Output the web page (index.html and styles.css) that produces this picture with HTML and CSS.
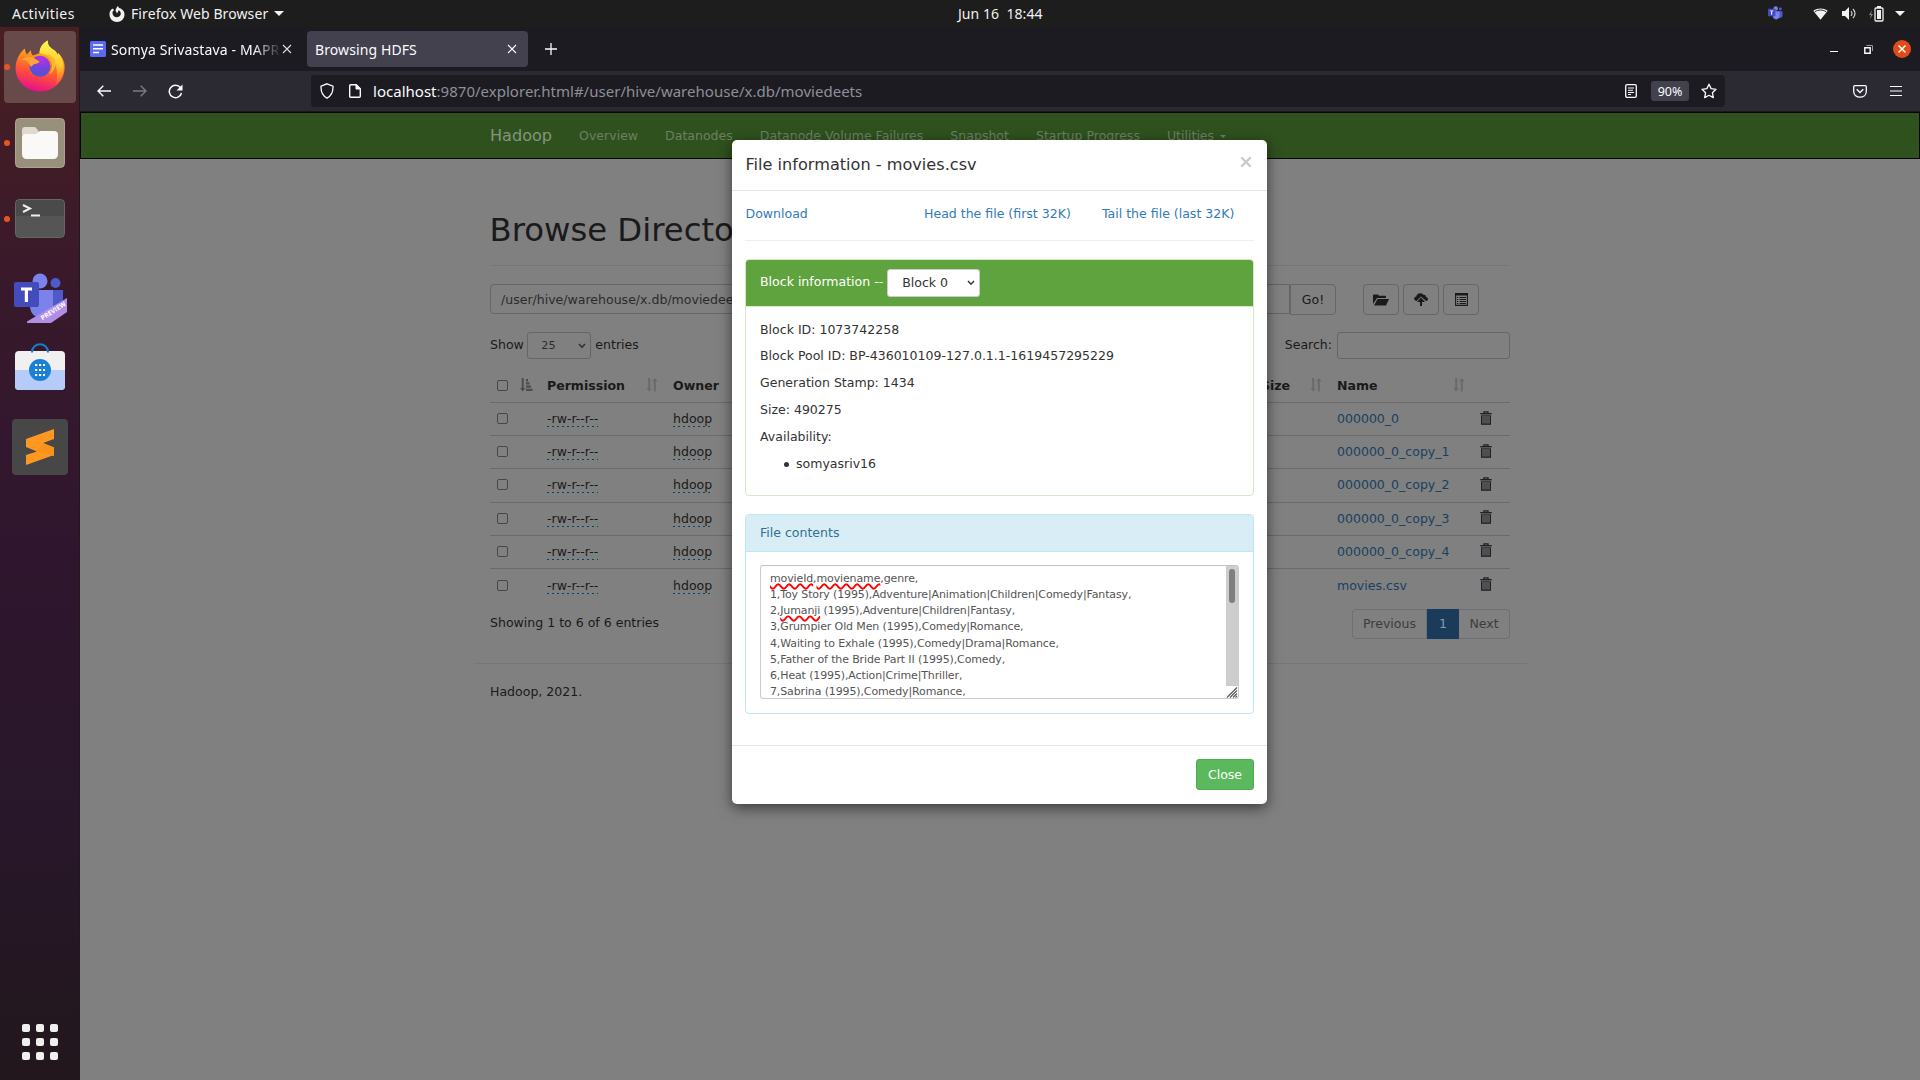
FILE: index.html
```html
<!DOCTYPE html>
<html lang="en">
<head>
<meta charset="utf-8">
<title>Browsing HDFS</title>
<link rel="stylesheet" href="styles.css">
</head>
<body>
<svg class="defs" width="0" height="0" aria-hidden="true">
  <defs>
    <linearGradient id="flame" x1="0.7" y1="0" x2="0.45" y2="1"><stop offset="0" stop-color="#ffd83a"/><stop offset=".4" stop-color="#ff8a1c"/><stop offset=".72" stop-color="#ff4544"/><stop offset="1" stop-color="#e3128a"/></linearGradient>
    <linearGradient id="tail" x1="0" y1="0" x2="0" y2="1"><stop offset="0" stop-color="#fff44f"/><stop offset=".55" stop-color="#ffcb2e"/><stop offset="1" stop-color="#ff8a16" stop-opacity=".15"/></linearGradient>
    <radialGradient id="globe" cx=".6" cy=".15" r=".85"><stop offset="0" stop-color="#b833e1"/><stop offset=".5" stop-color="#7a41d9"/><stop offset="1" stop-color="#4a55d8"/></radialGradient>
    <symbol id="x" viewBox="0 0 10 10"><path d="M1 1l8 8M9 1L1 9" stroke="currentColor" stroke-width="1.1"/></symbol>
    <symbol id="sort" viewBox="0 0 12 14"><path d="M2.200 0h2v10h1.700L3.200 13.500.4 10h1.800zM7.800 13.500h2v-10h1.800L8.800 0 6.200 3.500h1.600z" fill="currentColor"/></symbol>
    <symbol id="trash" viewBox="0 0 12 14"><path d="M4 2V.8h4V2" fill="none" stroke="currentColor" stroke-width="1.3"/><path d="M.3 2h11.400v1.400H.3z" fill="currentColor"/><path d="M1 4.300h10V13.800H1z" fill="currentColor"/><path d="M3 5v7.600M5 5v7.600M7 5v7.600M9 5v7.600" stroke="#808080" stroke-width="1"/></symbol>
    <symbol id="teams" viewBox="0 0 54 50"><circle cx="26" cy="8" r="7.500" fill="#7b83eb"/><circle cx="41.500" cy="10" r="5" fill="#5059c9"/><path d="M35 17h14v16a8 8 0 0 1-14 4z" fill="#5059c9"/><path d="M16 17h23v16c0 16-23 16-23 0z" fill="#7b83eb"/><rect y="9" width="25" height="25" rx="2" fill="#434cba"/><path d="M7 14.500h11v3h-4v11.500h-3.200V17.500H7z" fill="#fff"/></symbol>
    <symbol id="chev" viewBox="0 0 8 6"><path d="M1 1l3 3.300L7 1" fill="none" stroke="currentColor" stroke-width="1.400"/></symbol>
  </defs>
</svg>

<header class="topbar">
  <span class="activities">Activities</span>
  <svg class="ff-mini" viewBox="0 0 16 16"><path d="M2.200 3.500L4 2.500 5 4.300C3.500 5 3 7 4 9c1.500 3 6.500 3 7.600-.2.600-2-.4-3.800-1.800-4.500L8 7.500 6.500 4.500C7 2 8 1 9 0l1 2c3 .6 5.500 3 5.500 6.500C15.500 13 12 16 8 16S.5 13 .5 8.500C.5 6.500 1 5 2.200 3.500z" fill="#f2f2f2"/></svg>
  <span class="app-name">Firefox Web Browser</span>
  <i class="tri"></i>
  <span class="clock">Jun 16&nbsp; 18:44</span>
  <div class="tray">
    <svg class="t-teams" viewBox="0 0 54 50"><use href="#teams"/></svg>
    <svg class="t-wifi" viewBox="0 0 16 12"><path d="M.3 2.600C5-.6 11-.6 15.700 2.600L8 12z" fill="#f2f2f2"/><path d="M2 3.500c4-2.300 8-2.300 12 0" fill="none" stroke="#1d1d1d" stroke-width="1"/></svg>
    <svg class="t-vol" viewBox="0 0 15 13"><path d="M0 4h3l4-4v13L3 9H0z" fill="#f2f2f2"/><path d="M9 4q2 2.500 0 5M11 2q4 4.500 0 9" fill="none" stroke="#d0d0d0" stroke-width="1.200"/></svg>
    <svg class="t-bat" viewBox="0 0 15 16"><path d="M3 4L0 9h2l-1 4 3-5H2z" fill="#888"/><rect x="6" y="2" width="8" height="13" rx="1" fill="none" stroke="#f2f2f2" stroke-width="1.300"/><path d="M8 0h4v2H8zM8 4h4v9H8z" fill="#f2f2f2"/></svg>
    <i class="tri"></i>
  </div>
</header>

<div class="desktop">
  <nav class="dock">
    <div class="tile active"><i class="dot"></i>
      <svg width="50" height="52" viewBox="0 0 50 52"><path d="M10 8.500c0 2.500.8 4.500 2 6l4-4.500c0 3 .5 4.500 2 5.500l7-2.500C24.500 7 28 3 32.700.5c0 6 3.300 7.500 6.800 10 1.500 1 2.500 2.500 3.200 4.500l.6-2C47 17 49.700 21 49.700 27c0 14-11 24.500-24.700 24.500S.6 41 .6 28C.6 20 5 12 10 8.500z" fill="url(#flame)"/><path d="M24.300 13C25 7 28 3 32.700.5c0 6 3.300 7.500 6.800 10 1.500 1 2.500 2.500 3.200 4.500l.6-2C50 21 52 36 40 46c4-8 2-22-3-27-3-3-8-5-12.700-6z" fill="url(#tail)"/><circle cx="25" cy="26.300" r="10.500" fill="url(#globe)"/><path d="M14.500 24C11 19 8 20 6.500 20c3-3.500 8-3.500 11.500-2.500l6.500 4c-.5 2-4 2-6 3l-2.500 2.500z" fill="#ffa436"/><path d="M29 15c5 0 8 5 8 10 0 4-1 6-3 9 6-2 9-12 4-17-2.500-2-6-3-9-2z" fill="#ffb52c"/></svg>
    </div>
    <div class="tile files"><i class="dot"></i>
      <svg width="50" height="50" viewBox="0 0 50 50"><rect x=".5" y=".5" width="49" height="49" rx="4" fill="#98907b" stroke="#aaa493"/><path d="M7 17v-5q0-3 3-3h9q2 0 3 2l2 3h15q4 0 4 4z" fill="#dfdacd"/><path d="M7 19q0-3 4-3h10l4-3h14q4 0 4 4v19q0 5-5 5H12q-5 0-5-5z" fill="#faf9f7"/></svg>
    </div>
    <div class="tile term"><i class="dot"></i>
      <svg width="50" height="39" viewBox="0 0 50 39"><rect x=".5" y=".5" width="49" height="38" rx="4" fill="#555" stroke="#666"/><path d="M1 17V5q0-4 4-4h40q4 0 4 4v12z" fill="#4a4a4a"/><path d="M8 6l7 3.500L8 13" fill="none" stroke="#eee" stroke-width="2"/><path d="M16 16.500h9" stroke="#eee" stroke-width="2"/></svg>
    </div>
    <div class="tile tms">
      <svg width="54" height="50" viewBox="0 0 54 50"><use href="#teams"/><path d="M13 48.500L53 25v14L37 50H13z" fill="#b18ee5"/><text class="ribbon" transform="translate(28.500 47.500) rotate(-33)">PREVIEW</text></svg>
    </div>
    <div class="tile soft">
      <svg width="50" height="47" viewBox="0 0 50 47"><rect y="8" width="50" height="39" rx="4" fill="#f0f0f0"/><path d="M0 27h50v16q0 4-4 4H4q-4 0-4-4z" fill="#b5cbfa"/><path d="M17 9.500c0-11 16-11 16 0" fill="none" stroke="#1b7cc9" stroke-width="2"/><circle cx="25" cy="27" r="11" fill="#1b80d4"/><path d="M20 22h10M20 27h10M20 32h10" stroke="#fff" stroke-width="2.200" stroke-dasharray="2.200 1.800"/></svg>
    </div>
    <div class="tile subl">
      <svg width="56" height="56" viewBox="0 0 56 56"><rect width="56" height="56" rx="4" fill="#474747"/><path d="M14 20l28-10v10l-11 4 11 4.500V36L14 46V36l11-3.500L14 28z" fill="#ff9820"/><path d="M24 32.500l7-8.500 11 4.500V37z" fill="#f9921a"/></svg>
    </div>
    <div class="apps"><i></i><i></i><i></i><i></i><i></i><i></i><i></i><i></i><i></i></div>
  </nav>

  <main class="window">
    <div class="tabs">
      <svg class="doc-ico" width="16" height="16" viewBox="0 0 16 16"><rect width="16" height="16" rx="1.500" fill="#5b68f2"/><path d="M3 4h10M3 7.700h10M3 11.500h6" stroke="#fff" stroke-width="1.500"/></svg>
      <span class="tab-one">Somya Srivastava - MAPR</span>
      <svg class="x1" width="10" height="10"><use href="#x"/></svg>
      <div class="tab"><span>Browsing HDFS</span><svg width="10" height="10"><use href="#x"/></svg></div>
      <svg class="plus" width="12" height="12" viewBox="0 0 12 12"><path d="M6 0v12M0 6h12" stroke="#fbfbfe" stroke-width="1.300"/></svg>
      <div class="controls">
        <i class="min"></i>
        <svg width="9" height="9" viewBox="0 0 9 9"><path d="M.8 2.800h5.400v5.400H.8z" fill="none" stroke="#fff" stroke-width="1.400"/><path d="M2.500.5h6V6" fill="none" stroke="#999"/></svg>
        <span class="close-win"><svg width="10" height="10" viewBox="0 0 10 10"><path d="M1.500 1.500l7 7M8.500 1.500l-7 7" stroke="#fff" stroke-width="1.500"/></svg></span>
      </div>
    </div>
    <div class="toolbar">
      <svg class="back" width="14" height="12" viewBox="0 0 14 12"><path d="M14 6H1M6.300.7L1 6l5.300 5.300" fill="none" stroke="#fbfbfe" stroke-width="1.400"/></svg>
      <svg class="fwd" width="14" height="12" viewBox="0 0 14 12"><path d="M0 6h13M7.700.7L13 6l-5.300 5.300" fill="none" stroke="#7a7981" stroke-width="1.400"/></svg>
      <svg class="reload" width="15" height="15" viewBox="0 0 15 15"><path d="M12.500 3.800A6.200 6.200 0 1 0 13.500 9" fill="none" stroke="#fbfbfe" stroke-width="1.500"/><path d="M14.500.5v6H8.500z" fill="#fbfbfe"/></svg>
      <div class="urlbar">
        <svg class="shield" width="14" height="16" viewBox="0 0 14 16"><path d="M7 .8l6 2.400c.2 5-1 9.500-6 12-5-2.500-6.200-7-6-12z" fill="none" stroke="#fbfbfe" stroke-width="1.300"/></svg>
        <svg class="page-ico" width="12" height="14" viewBox="0 0 12 14"><path d="M.7 1.700q0-1 1-1h5.500l4.100 4.100v7.500q0 1-1 1H1.700q-1 0-1-1z" fill="none" stroke="#fbfbfe" stroke-width="1.400"/><path d="M7 .7v4.300h4.300z" fill="#fbfbfe" stroke="#fbfbfe"/></svg>
        <span class="url"><b>localhost</b>:9870/explorer.html#/user/hive/warehouse/x.db/moviedeets</span>
        <svg class="reader" width="12" height="14" viewBox="0 0 12 14"><rect x=".7" y=".7" width="10.600" height="12.600" rx="1.300" fill="none" stroke="#fbfbfe" stroke-width="1.300"/><path d="M3 4h6M3 6.300h5M3 8.500h6M3 10.500h3" stroke="#fbfbfe"/></svg>
        <span class="pct">90%</span>
        <svg class="star" width="16" height="16" viewBox="0 0 16 16"><path d="M8 1.200l2.100 4.400 4.900.7-3.600 3.400.9 4.900L8 12.300l-4.300 2.300.9-4.900L1 6.300l4.900-.7z" fill="none" stroke="#fbfbfe" stroke-width="1.300" stroke-linejoin="round"/></svg>
      </div>
      <svg class="pocket" width="14" height="13" viewBox="0 0 14 13"><path d="M1.700.7h10.600q1 0 1 1v4.500c0 8-12.600 8-12.600 0V1.700q0-1 1-1z" fill="none" stroke="#fbfbfe" stroke-width="1.300"/><path d="M3.700 4.300L7 7.500l3.300-3.200" fill="none" stroke="#fbfbfe" stroke-width="1.400"/></svg>
      <svg class="menu" width="12" height="10" viewBox="0 0 12 10"><path d="M0 .5h12M0 5h12M0 9.500h12" stroke="#fbfbfe" stroke-width="1.200"/></svg>
    </div>

    <div class="page">
      <div class="navbar">
        <span class="brand">Hadoop</span>
        <span>Overview</span><span>Datanodes</span><span>Datanode Volume Failures</span><span>Snapshot</span><span>Startup Progress</span><span>Utilities <i class="caret"></i></span>
      </div>
      <div class="container">
        <h1>Browse Directory</h1>
        <div class="path-row">
          <div class="path">/user/hive/warehouse/x.db/moviedeets</div><div class="go">Go!</div>
          <div class="ibtn"><svg width="16" height="12" viewBox="0 0 16 12"><path d="M0 10V1.500Q0 .5 1 .5h4l1 1.300h6q1 0 1 1V4H4z" fill="currentColor"/><path d="M4.500 5H16l-3 6.500H1z" fill="currentColor"/></svg></div>
          <div class="ibtn"><svg width="14" height="13" viewBox="0 0 14 13"><path d="M5.700 8H3C-.5 8-.6 4 2.300 3.500 3 .2 7-.8 9.300 1.800 11.500 1.500 12 3 12 4c3 .5 2.200 4 0 4L7 3.500 2.500 8z" fill="currentColor"/><path d="M7 4.500L11 9H8v4H6V9H3z" fill="currentColor"/></svg></div>
          <div class="ibtn"><svg width="13" height="13" viewBox="0 0 13 13"><path d="M.6.6h11.800v11.800H.6z" fill="none" stroke="currentColor" stroke-width="1.100"/><path d="M0 0h13v2.500H0zM2 4h1.300v1H2zM2 6h1.300v1H2zM2 8h1.300v1H2zM2 10h1.300v1H2zM4.500 4H11v1H4.500zM4.500 6H11v1H4.500zM4.500 8H11v1H4.500zM4.500 10H11v1H4.500z" fill="currentColor"/></svg></div>
        </div>
        <div class="filters">
          <span>Show</span><div class="select len">25<svg width="8" height="6"><use href="#chev"/></svg></div><span>entries</span>
          <span class="search-label">Search:</span><div class="search"></div>
        </div>
        <div class="table">
          <div class="tr head"><i class="cb"></i><svg class="s0" width="14" height="14" viewBox="0 0 14 14"><path d="M2.700 0h2v10h1.800L3.700 13.500.9 10h1.800zM7 1h2v2.400H7zM7 4.200h3.500v2.400H7zM7 7.400h5v2.400H7zM7 10.700h6.500v2.400H7z" fill="currentColor"/></svg><b class="perm">Permission<svg width="12" height="14"><use href="#sort"/></svg></b><b class="own">Owner</b><b class="size">Size<svg width="12" height="14"><use href="#sort"/></svg></b><b class="name">Name<svg width="12" height="14"><use href="#sort"/></svg></b></div>
          <div class="tr"><i class="cb"></i><span class="perm"><u>-rw-r--r--</u></span><span class="own"><u>hdoop</u></span><a class="name">000000_0</a><svg class="bin" width="12" height="14"><use href="#trash"/></svg></div>
          <div class="tr"><i class="cb"></i><span class="perm"><u>-rw-r--r--</u></span><span class="own"><u>hdoop</u></span><a class="name">000000_0_copy_1</a><svg class="bin" width="12" height="14"><use href="#trash"/></svg></div>
          <div class="tr"><i class="cb"></i><span class="perm"><u>-rw-r--r--</u></span><span class="own"><u>hdoop</u></span><a class="name">000000_0_copy_2</a><svg class="bin" width="12" height="14"><use href="#trash"/></svg></div>
          <div class="tr"><i class="cb"></i><span class="perm"><u>-rw-r--r--</u></span><span class="own"><u>hdoop</u></span><a class="name">000000_0_copy_3</a><svg class="bin" width="12" height="14"><use href="#trash"/></svg></div>
          <div class="tr"><i class="cb"></i><span class="perm"><u>-rw-r--r--</u></span><span class="own"><u>hdoop</u></span><a class="name">000000_0_copy_4</a><svg class="bin" width="12" height="14"><use href="#trash"/></svg></div>
          <div class="tr"><i class="cb"></i><span class="perm"><u>-rw-r--r--</u></span><span class="own"><u>hdoop</u></span><a class="name">movies.csv</a><svg class="bin" width="12" height="14"><use href="#trash"/></svg></div>
        </div>
        <div class="summary"><span>Showing 1 to 6 of 6 entries</span><div class="pager"><span class="prev">Previous</span><span class="cur">1</span><span class="next">Next</span></div></div>
        <div class="copyright">Hadoop, 2021.</div>
      </div>
    </div>
  </main>
</div>

<section class="modal">
  <div class="modal-head"><span>File information - movies.csv</span><svg width="12" height="12" viewBox="0 0 12 12"><path d="M1.300 1.300l9.400 9.400M10.700 1.300L1.300 10.700" stroke="#ccc" stroke-width="2.400"/></svg></div>
  <div class="modal-body">
    <div class="links"><a>Download</a><a>Head the file (first 32K)</a><a>Tail the file (last 32K)</a></div>
    <div class="panel green">
      <div class="panel-head"><span>Block information --</span><div class="select block">Block 0<svg width="8" height="6"><use href="#chev"/></svg></div></div>
      <div class="panel-body">
        <p>Block ID: 1073742258</p><p>Block Pool ID: BP-436010109-127.0.1.1-1619457295229</p><p>Generation Stamp: 1434</p><p>Size: 490275</p><p>Availability:</p>
        <p class="item">somyasriv16</p>
      </div>
    </div>
    <div class="panel blue">
      <div class="panel-head">File contents</div>
      <div class="panel-body">
        <div class="contents">
          <div class="lines"><p><em>movieId</em>,<em>moviename</em>,genre,</p><p>1,Toy Story (1995),Adventure|Animation|Children|Comedy|Fantasy,</p><p>2,<em>Jumanji</em> (1995),Adventure|Children|Fantasy,</p><p>3,Grumpier Old Men (1995),Comedy|Romance,</p><p>4,Waiting to Exhale (1995),Comedy|Drama|Romance,</p><p>5,Father of the Bride Part II (1995),Comedy,</p><p>6,Heat (1995),Action|Crime|Thriller,</p><p>7,Sabrina (1995),Comedy|Romance,</p></div>
          <div class="scroll"><div class="track"><i></i></div><svg width="12" height="12" viewBox="0 0 12 12"><path d="M1 11.500L11 1.500M4 11.500l7-7M7 11.500l4-4M9.500 11.500L11 10" stroke="#555" stroke-width="1.100"/></svg></div>
        </div>
      </div>
    </div>
  </div>
  <div class="modal-foot"><span class="close-btn">Close</span></div>
</section>
</body>
</html>
```

FILE: styles.css
```css
* { box-sizing: border-box; }
html, body { margin: 0; width: 1920px; height: 1080px; overflow: hidden; }
body { font: 12.540px/18px "DejaVu Sans", sans-serif; color: #1a1a1a; background: #808080; display: flex; flex-direction: column; }
.defs { position: absolute; }
svg { display: block; flex: none; }
p { margin: 0; }
h1 { margin: 0; font-weight: 500; }

/* desktop panel */
.topbar { height: 27px; background: #1d1d1d; color: #f2f2f2; display: flex; align-items: center; font: 14px/26px "Noto Sans", sans-serif; padding-left: 12px; white-space: nowrap; flex: none; }
.activities { width: 97px; letter-spacing: .45px; }
.ff-mini { width: 16px; height: 16px; margin-right: 6px; }
.app-name { width: 143px; letter-spacing: .1px; }
.tri { width: 0; height: 0; border: 5px solid transparent; border-top-color: #f2f2f2; border-bottom: 0; }
.clock { margin-left: 674px; letter-spacing: .05px; }
.tray { margin-left: auto; margin-right: 15px; display: flex; align-items: center; }
.t-teams { width: 16px; height: 15px; margin-right: 29px; }
.t-wifi { width: 15px; height: 12px; margin-right: 14px; }
.t-vol { width: 15px; height: 13px; margin-right: 12px; }
.t-bat { width: 15px; height: 16px; margin-right: 11px; }

.desktop { flex: 1; display: flex; min-height: 0; }
.dock { width: 80px; background: linear-gradient(#491f22, #38192b 25%, #2f162e 50%, #28172a 75%, #21171c); display: flex; flex-direction: column; align-items: center; padding-top: 4px; border-right: 1px solid #21171c; }
.tile { position: relative; display: flex; justify-content: center; align-items: center; width: 72px; }
.active { height: 72px; background: #684a4b; border-radius: 4px; padding-bottom: 2px; }
.dot { position: absolute; left: 0; top: 50%; width: 6px; height: 6px; margin-top: -3px; border-radius: 50%; background: #e95420; }
.files { margin-top: 15px; }
.term { margin-top: 31px; }
.tms { margin-top: 35px; padding-left: 2px; }
.soft { margin-top: 20px; }
.subl { margin-top: 29px; }
.ribbon { font: bold 6.500px "Open Sans", sans-serif; fill: #fff; }
.apps { margin-top: auto; margin-bottom: 20px; display: grid; grid-template-columns: repeat(3, 8px); gap: 6px; }
.apps i { height: 8px; border-radius: 2px; background: #f0efee; }

/* browser chrome */
.window { flex: 1; display: flex; flex-direction: column; min-width: 0; }
.tabs { height: 44px; background: #1c1b22; color: #fbfbfe; display: flex; align-items: center; padding-left: 10px; font: 14px/36px "Noto Sans", sans-serif; white-space: nowrap; }
.doc-ico { margin-right: 5px; }
.tab-one { width: 169px; padding-top: 2px; overflow: hidden; letter-spacing: .14px; -webkit-mask-image: linear-gradient(90deg, #000 84%, transparent 101%); mask-image: linear-gradient(90deg, #000 84%, transparent 101%); }
.x1 { margin-left: 2px; margin-right: 15px; color: #ddd; }
.tab { width: 221px; height: 36px; padding: 0 11px 0 8px; background: #42414d; border-radius: 4px; display: flex; align-items: center; justify-content: space-between; }
.tab span { padding-top: 2px; letter-spacing: .1px; }
.plus { margin-left: 17px; }
.controls { margin-left: auto; margin-right: 9px; display: flex; align-items: center; }
.min { width: 8px; height: 1px; background: #fff; margin: 4px 26px 0 0; }
.close-win { width: 18px; height: 18px; margin-left: 20px; border-radius: 50%; background: #e04b17; display: grid; place-items: center; }
.toolbar { height: 40px; background: #2b2a33; display: flex; align-items: center; padding-left: 17px; }
.back { margin-right: 22px; }
.fwd { margin-right: 21px; }
.reload { margin-right: 128px; }
.urlbar { width: 1414px; height: 32px; background: #1c1b22; border-radius: 4px; display: flex; align-items: center; padding: 0 8px 0 9px; }
.page-ico { margin: 0 12px 0 15px; }
.url { font: 15px/32px "Noto Sans", sans-serif; color: #8f8f98; white-space: nowrap; letter-spacing: .02px; }
.url b { font-weight: 400; color: #fbfbfe; }
.reader { margin-left: auto; }
.pct { width: 38px; height: 20px; margin: 0 12px 0 14px; border-radius: 3px; background: #42414d; color: #fbfbfe; font: 12.500px/21px "Noto Sans", sans-serif; text-align: center; }
.pocket { margin-left: 128px; }
.menu { margin-left: 23px; }

/* HDFS page beneath the backdrop */
.page { flex: 1; background: #808080; border-top: 1px solid #18171c; }
.navbar { height: 47px; background: #2f511e; border: 1px solid #040703; display: flex; align-items: center; padding-left: 409px; white-space: nowrap; color: #6c7f64; }
.navbar span { margin-right: 27px; }
.navbar .brand { font-size: 16.100px; color: #84947d; }
.caret { display: inline-block; border: 3.500px solid transparent; border-top-color: currentColor; border-bottom: 0; vertical-align: 2px; margin-left: 2px; }
.container { margin-left: 396px; width: 1048px; padding: 0 14px; }
h1 { font-size: 32.300px; line-height: 36px; height: 107px; padding-top: 53px; margin-left: -.5px; border-bottom: 1px solid #767676; }
.path-row { display: flex; margin-top: 18px; height: 31px; }
.path { width: 800px; height: 30px; border: 1px solid #666; border-radius: 4px 0 0 4px; padding: 0 10px; line-height: 29px; color: #2b2b2b; }
.go { width: 46px; border: 1px solid #666; border-radius: 0 4px 4px 0; text-align: center; line-height: 29px; margin-right: 27px; }
.ibtn { width: 36px; margin-right: 4px; border: 1px solid #666; border-radius: 4px; display: grid; place-items: center; }
.filters { display: flex; align-items: center; height: 27px; margin-top: 17px; line-height: 24px; }
.filters > span { margin-top: -2px; }
.select { display: flex; align-items: center; justify-content: space-between; border: 1px solid #666; border-radius: 3px; }
.len { width: 64px; height: 27px; margin: 0 4px 0 3.500px; padding: 0 4px 0 13px; color: #2b2b2b; font-size: 11.300px; }
.search-label { margin-left: auto; margin-right: 5px; }
.search { width: 173px; height: 27px; border: 1px solid #666; border-radius: 3px; }
.table { margin-top: 10px; }
.tr { display: grid; grid-template-columns: 30px 27px 126px 600px 64px 143px 1fr; align-items: center; height: 33.200px; border-bottom: 1px solid #6a6a6a; }
.tr:last-child { border-bottom: 0; }
.head { height: 34px; padding-top: 1px; }
.tr > * { grid-row: 1; }
.cb { width: 11px; height: 11px; margin-left: 7px; margin-top: -1px; border: 1px solid #47464c; border-radius: 2px; }
.s0 { grid-column: 2; color: #4d4d4d; margin: -2px 0 0 -1px; }
.perm { grid-column: 3; }
.own { grid-column: 4; }
.size { grid-column: 5; margin-left: -12px; }
.name { grid-column: 6; margin-left: 0; }
.tr b { display: flex; align-items: center; justify-content: space-between; }
.tr b svg { color: #6a6a6a; margin: -2px 15px 0 0; }
.bin { grid-column: 7; color: #1f1f24; margin-top: -3px; }
.tr a { color: #1a3f60; }
.tr u { text-decoration: none; padding-bottom: 1px; background: repeating-linear-gradient(90deg, #044466 0 2px, transparent 2px 5px) bottom / 100% 1px no-repeat; }
.summary { display: flex; justify-content: space-between; padding-top: 7px; height: 61px; line-height: 27px; }
.pager { display: flex; height: 30px; line-height: 28px; text-align: center; color: #3c3c3c; }
.prev { width: 75px; border: 1px solid #6f6f6f; border-radius: 4px 0 0 4px; }
.cur { width: 32px; background: #1a3c5b; color: #8f9aa5; line-height: 30px; }
.next { width: 51px; border: 1px solid #6f6f6f; border-left: 0; border-radius: 0 4px 4px 0; }
.copyright { margin: 0 -16.500px; padding: 19px 16.500px 0; border-top: 1px solid #767676; }

/* file dialog */
.modal { position: absolute; left: 732px; top: 140px; width: 535px; height: 664px; background: #fff; border-radius: 5px; box-shadow: 0 4px 14px rgba(0,0,0,.55); color: #333; display: flex; flex-direction: column; }
.modal-head { height: 51px; padding: 0 15px 1px 13.500px; display: flex; align-items: center; justify-content: space-between; border-bottom: 1px solid #e5e5e5; font-size: 16.140px; }
.modal-head svg { margin-top: -5px; }
.modal-body { padding: 0 13px; flex: 1; }
.links { height: 50px; border-bottom: 1px solid #eee; display: grid; grid-template-columns: 178.500px 178px 1fr; padding: 14px 0 0 .5px; color: #337ab7; white-space: nowrap; }
.panel { border: 1px solid #d6e9c6; border-radius: 4px; margin-top: 18px; overflow: hidden; }
.green { height: 237px; }
.green .panel-head { height: 47px; background: #5fa33e; border-bottom: 1px solid #d6e9c6; color: #fff; display: flex; align-items: center; padding-left: 14px; }
.green .panel-head span { margin-top: -3px; }
.block { width: 93px; height: 28px; margin-left: 4px; padding: 0 4px 0 14px; background: #fff; border-color: #ccc; color: #333; }
.green .panel-body { padding: 13.600px 14px; }
.green p { height: 26.850px; white-space: nowrap; }
.item { padding-left: 36px; position: relative; }
.item::before { content: ""; position: absolute; left: 24px; top: 7px; width: 5px; height: 5px; border-radius: 50%; background: #333; }
.blue { height: 200px; border-color: #bce8f1; }
.blue .panel-head { height: 37px; line-height: 36px; padding-left: 14px; background: #d9edf7; border-bottom: 1px solid #bce8f1; color: #31708f; }
.blue .panel-body { padding: 13px 14px; }
.contents { width: 479px; height: 134px; border: 1px solid #ccc; border-top-color: #c2c2c2; border-radius: 3px; display: flex; justify-content: space-between; overflow: hidden; }
.lines { padding: 5px 0 0 9px; font-size: 11px; letter-spacing: -.13px; line-height: 16.150px; color: #555; white-space: nowrap; }
.lines em { font-style: normal; text-decoration: underline wavy #f00 1.500px; text-underline-offset: 1px; text-decoration-skip-ink: none; }
.scroll { width: 12px; display: flex; flex-direction: column; }
.track { flex: 1; background: #cdcdcd; padding: 3px; }
.track i { display: block; width: 6px; height: 34px; border-radius: 3px; background: #7d8080; }
.modal-foot { height: 59px; border-top: 1px solid #e5e5e5; padding: 13px 13px 0; display: flex; justify-content: flex-end; }
.close-btn { width: 58px; height: 31px; border: 1px solid #4cae4c; border-radius: 3px; background: #5cb85c; color: #fff; text-align: center; line-height: 29px; }
```
